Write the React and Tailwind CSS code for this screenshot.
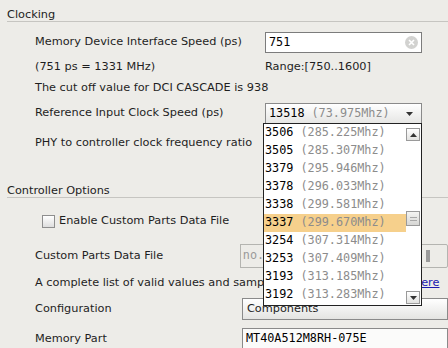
import { useState } from "react";

const items = [
  ["3506", "285.225"],
  ["3505", "285.307"],
  ["3379", "295.946"],
  ["3378", "296.033"],
  ["3338", "299.581"],
  ["3337", "299.670"],
  ["3254", "307.314"],
  ["3253", "307.409"],
  ["3193", "313.185"],
  ["3192", "313.283"],
];

const mono = "font-['DejaVu_Sans_Mono',monospace] text-[11.8px]";

function Arrow({ up }) {
  return (
    <svg width="7" height="4" viewBox="0 0 7 4">
      <path d={up ? "M0 4 L3.5 0 L7 4 Z" : "M0 0 L7 0 L3.5 4 Z"} fill="#333" />
    </svg>
  );
}

function Heading({ children, h }) {
  return (
    <div
      className={`ml-[7px] ${h} flex items-end border-b border-[#c6c5c1] text-[#222]`}
    >
      <span className="leading-[13px]">{children}</span>
    </div>
  );
}

function DropList() {
  const [sel, setSel] = useState("3337");
  return (
    <div className="absolute left-[263px] top-[123px] w-[159px] h-[183px] border border-[#222] bg-white flex">
      <div className="flex-1 flex flex-col">
        {items.map(([v, f]) => (
          <div
            key={v}
            onClick={() => setSel(v)}
            className={`h-[18px] flex items-center pl-[1px] whitespace-nowrap ${mono} ${
              sel === v ? "bg-[#f6d08c]" : ""
            }`}
          >
            <span className="text-black">{v}</span>
            <span className="text-[#8c8c8c] ml-[7px]">({f}Mhz)</span>
          </div>
        ))}
      </div>
      <div className="w-[15px] relative bg-white">
        <div className="absolute left-[0px] top-[4px] w-[14px] h-[13px] border border-[#9a9a9a] bg-gradient-to-b from-white to-[#e2e2e0] flex items-center justify-center">
          <Arrow up />
        </div>
        <div className="absolute left-[0px] top-[87px] w-[14px] h-[15px] border border-[#9a9a9a] bg-gradient-to-b from-[#f4f4f2] to-[#d6d6d4] flex flex-col items-center justify-center gap-[2px]">
          <div className="w-[7px] h-[1px] bg-[#a8a8a8]" />
          <div className="w-[7px] h-[1px] bg-[#a8a8a8]" />
        </div>
        <div className="absolute left-[0px] top-[167px] w-[14px] h-[13px] border border-[#9a9a9a] bg-gradient-to-b from-white to-[#e2e2e0] flex items-center justify-center">
          <Arrow />
        </div>
      </div>
    </div>
  );
}

export default function App() {
  return (
    <div className="relative w-[448px] h-[348px] overflow-hidden bg-[#edece8] text-[11.3px] text-[#1e1e1e] font-['DejaVu_Sans',sans-serif]">
      <Heading h="h-[22px]">Clocking</Heading>

      <div className="mt-[10px] h-[21px] flex items-center">
        <span className="ml-[35px] w-[230px]">Memory Device Interface Speed (ps)</span>
        <div className="w-[157px] h-[21px] bg-white border border-[#7c7c7c] flex items-center justify-between pl-[3px] pr-[3px]">
          <span className={mono + " text-black"}>751</span>
          <span className="w-[13px] h-[13px] rounded-full bg-[#d2d2d0] flex items-center justify-center">
            <svg width="7" height="7" viewBox="0 0 7 7">
              <path d="M1 1 L6 6 M6 1 L1 6" stroke="white" strokeWidth="1.6" />
            </svg>
          </span>
        </div>
      </div>

      <div className="h-[28px] flex items-center">
        <span className="ml-[35px] w-[230px]">(751 ps = 1331 MHz)</span>
        <span>Range:[750..1600]</span>
      </div>

      <div className="h-[14px] flex items-center">
        <span className="ml-[35px]">The cut off value for DCI CASCADE is 938</span>
      </div>

      <div className="mt-[8px] h-[21px] flex items-center">
        <span className="ml-[35px] w-[230px]">Reference Input Clock Speed (ps)</span>
        <div className="w-[157px] h-[21px] border border-[#8a8a8a] bg-gradient-to-b from-white to-[#e6e6e4] flex items-center justify-between pl-[3px] pr-[8px]">
          <span className={mono}>
            <span className="text-black">13518</span>
            <span className="text-[#8c8c8c] ml-[7px]">(73.975Mhz)</span>
          </span>
          <Arrow />
        </div>
      </div>

      <div className="h-[38px] flex items-center">
        <span className="ml-[35px]">PHY to controller clock frequency ratio</span>
      </div>

      <Heading h="h-[36px]">Controller Options</Heading>

      <div className="h-[46px] flex items-center">
        <span className="ml-[42px] w-[13px] h-[13px] border border-[#8e8e8e] bg-gradient-to-b from-white to-[#dedede]" />
        <span className="ml-[4px]">Enable Custom Parts Data File</span>
      </div>

      <div className="h-[24px] flex items-center">
        <span className="ml-[35px] w-[211px]">Custom Parts Data File</span>
        <div className="w-[181px] h-[24px] border border-[#b4b4b0] flex items-center pl-[2px]">
          <span className={mono + " text-[#9a9a9a]"}>no.</span>
        </div>
        <div className="ml-[3px] w-[30px] h-[24px] border border-[#b4b4b0] rounded-[2px] flex items-center pl-[6px]">
          <div className="w-[4px] h-[12px] bg-[#9a9a9a]" />
        </div>
      </div>

      <div className="h-[30px] flex items-center whitespace-nowrap">
        <span className="ml-[35px] w-[379px]">
          A complete list of valid values and samples is
        </span>
        <span className="text-[#1a1ab0] underline">here</span>
      </div>

      <div className="h-[22px] flex items-center">
        <span className="ml-[35px] w-[211px]">Configuration</span>
        <div className="w-[210px] h-[22px] border border-[#8a8a8a] bg-gradient-to-b from-white to-[#e4e4e2] flex items-center pl-[4px]">
          Components
        </div>
      </div>

      <div className="mt-[8px] h-[22px] flex items-center">
        <span className="ml-[35px] w-[211px]">Memory Part</span>
        <div className="w-[210px] h-[22px] border border-[#8a8a8a] bg-[#fbfbfa] flex items-center pl-[3px]">
          <span className={mono + " text-black"}>MT40A512M8RH-075E</span>
        </div>
      </div>

      <DropList />
    </div>
  );
}
